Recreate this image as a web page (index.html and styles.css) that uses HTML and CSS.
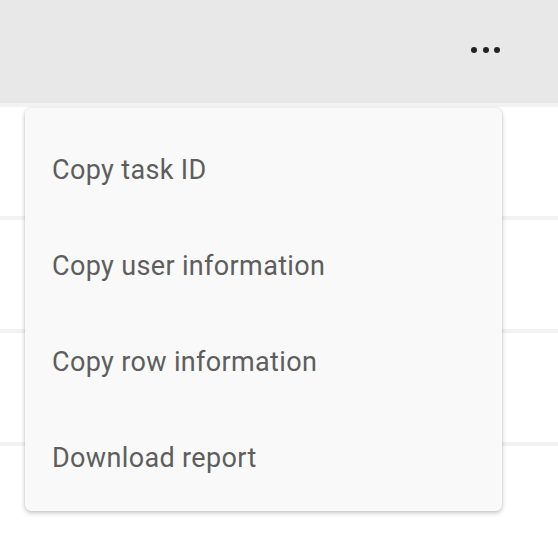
FILE: index.html
```html
<!DOCTYPE html>
<html>
<head>
<meta charset="utf-8">
<link rel="stylesheet" href="styles.css">
</head>
<body>
<div class="page">
  <div class="header">
    <button class="more" aria-label="More">
      <span class="dot"></span><span class="dot"></span><span class="dot"></span>
    </button>
  </div>
  <div class="row"></div>
  <div class="row"></div>
  <div class="row"></div>
  <div class="row last"></div>
  <ul class="menu">
    <li class="item">Copy task ID</li>
    <li class="item">Copy user information</li>
    <li class="item">Copy row information</li>
    <li class="item">Download report</li>
  </ul>
</div>
</body>
</html>
```
FILE: styles.css
```css
html, body {
  margin: 0;
  padding: 0;
  background: #ffffff;
  font-family: Roboto, "Liberation Sans", sans-serif;
}
.page {
  position: relative;
  width: 558px;
  height: 544px;
  overflow: hidden;
}
.header {
  height: 103px;
  background: #e8e8e8;
  border-bottom: 4px solid #f2f2f2;
  display: flex;
  justify-content: flex-end;
  align-items: center;
  padding-right: 58px;
}
.more {
  border: 0;
  background: transparent;
  padding: 0;
  margin-top: -3px;
  display: flex;
  gap: 5.5px;
  cursor: pointer;
}
.dot {
  width: 6px;
  height: 6px;
  border-radius: 50%;
  background: #232323;
}
.row {
  height: 109px;
  border-bottom: 4px solid #f2f2f2;
}
.row.last {
  border-bottom: 0;
}
.menu {
  position: absolute;
  top: 108px;
  left: 25px;
  width: 477px;
  margin: 0;
  padding: 14px 0 5px;
  list-style: none;
  background: #f9f9f9;
  border-radius: 6px;
  box-shadow: 0 2px 5px rgba(0, 0, 0, 0.22), 0 0 2px rgba(0, 0, 0, 0.12);
}
.item {
  height: 96px;
  display: flex;
  align-items: center;
  padding-left: 27px;
  font-size: 27px;
  letter-spacing: 0.35px;
  color: #5e5e5e;
}
```
